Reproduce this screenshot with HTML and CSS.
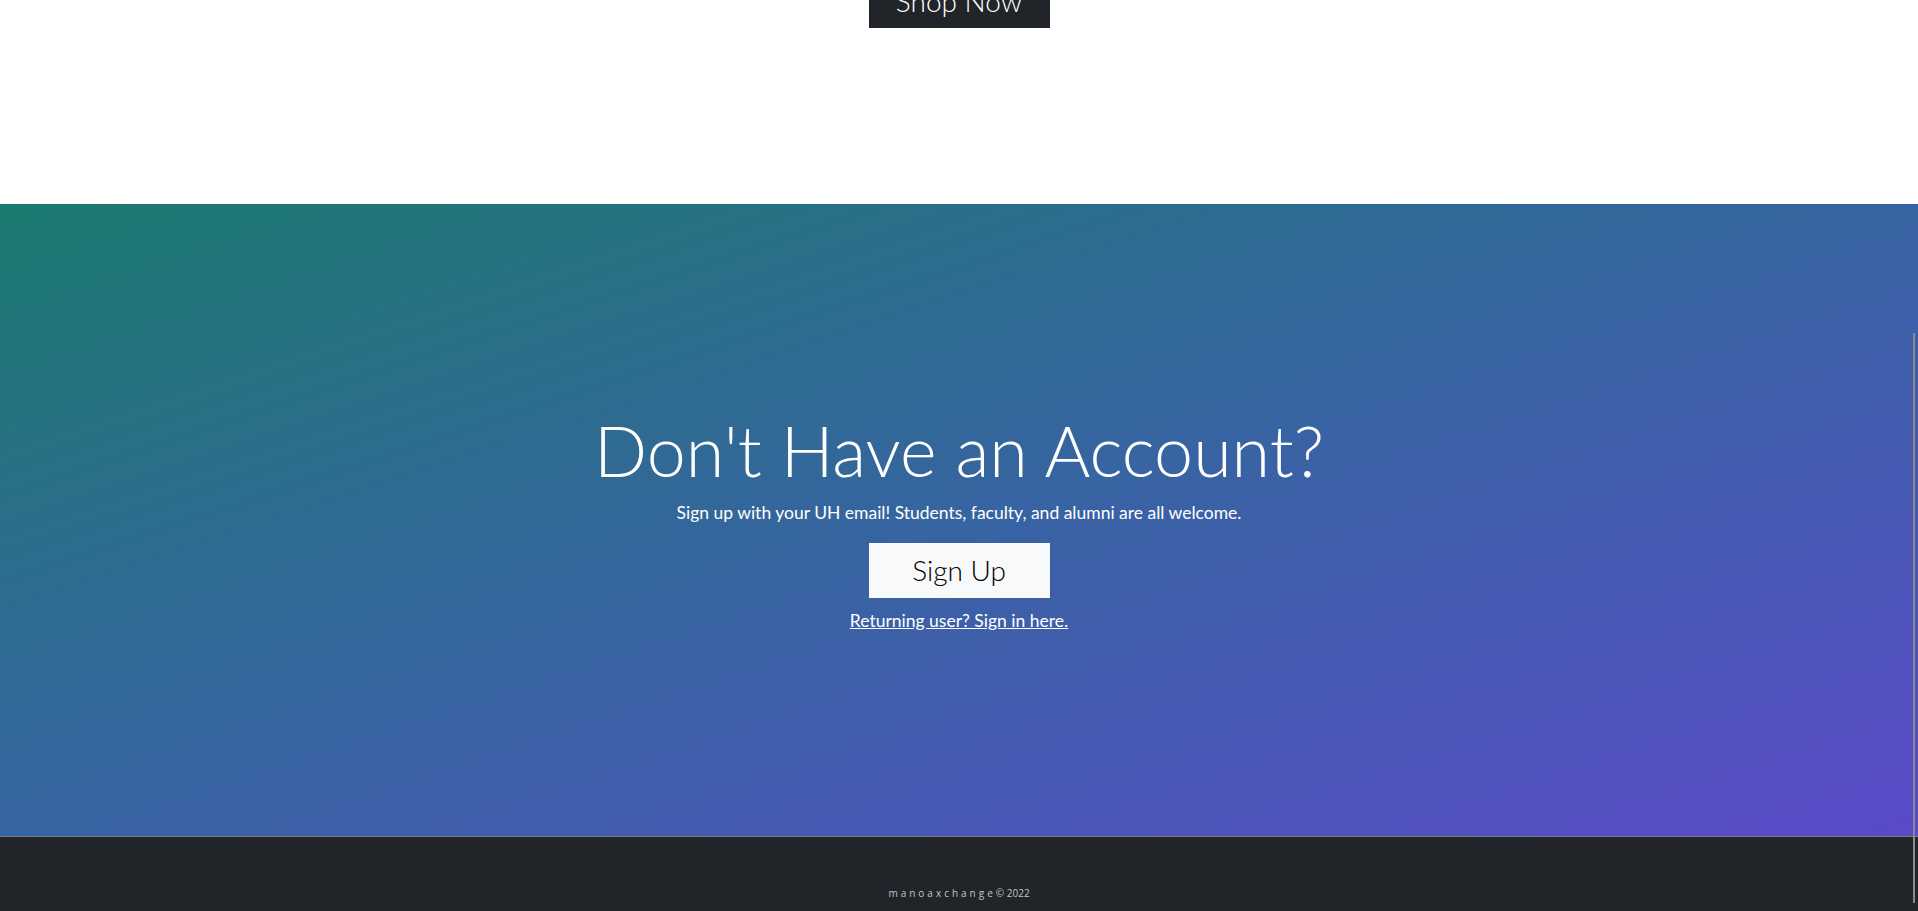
FILE: index.html
```html
<!DOCTYPE html>
<html lang="en">
<head>
<meta charset="utf-8">
<title>manoaxchange</title>
<link rel="stylesheet" href="styles.css">
</head>
<body>
<section class="shop">
  <a class="btn btn-dark" href="#">Shop Now</a>
</section>
<section class="cta">
  <h1 class="cta-title">Don't Have an Account?</h1>
  <p class="cta-text">Sign up with your UH email! Students, faculty, and alumni are all welcome.</p>
  <a class="btn btn-light" href="#">Sign Up</a>
  <a class="cta-link" href="#">Returning user? Sign in here.</a>
</section>
<footer class="footer">
  <p class="footer-text"><span class="brand">manoaxchange</span>© 2022</p>
</footer>
<div class="scroll-thumb"></div>
</body>
</html>
```
FILE: styles.css
```css
html, body {
  margin: 0;
  padding: 0;
}
body {
  font-family: "Lato", "Liberation Sans", sans-serif;
  background: #ffffff;
  overflow: hidden;
}
.shop {
  height: 204px;
  display: flex;
  justify-content: center;
  align-items: flex-start;
}
.btn {
  display: inline-flex;
  align-items: center;
  justify-content: center;
  box-sizing: border-box;
  width: 181px;
  height: 55px;
  font-family: "Lato", sans-serif;
  font-weight: 300;
  font-size: 28px;
  text-decoration: none;
}
.btn-dark {
  margin-top: -27px;
  background: #212529;
  color: #ffffff;
}
.btn-light {
  background: #f8f9fa;
  color: #000000;
  margin-top: 17px;
}
.cta {
  height: 632px;
  background: linear-gradient(to bottom right, #1b7a6f 0%, #3764a2 50%, #5a4ac9 100%);
  display: flex;
  flex-direction: column;
  align-items: center;
  justify-content: center;
  color: #ffffff;
}
.cta-title {
  margin: 0;
  font-weight: 300;
  font-size: 70px;
  line-height: 1.2;
}
.cta-text {
  margin: 8px 0 0;
  font-size: 17.5px;
  line-height: 26px;
}
.cta-link {
  color: #ffffff;
  font-size: 17.5px;
  line-height: 24px;
  margin-top: 11px;
  text-decoration: underline;
}
.footer {
  border-top: 1px solid #7d7d7d;
  background: #212529;
  height: 80px;
  display: flex;
  justify-content: center;
}
.footer-text {
  margin: 0;
  margin-top: 49px;
  font-family: "Open Sans", sans-serif;
  font-size: 10px;
  color: #c4c4c4;
}
.brand {
  letter-spacing: 3px;
}
.scroll-thumb {
  position: fixed;
  right: 3px;
  top: 333px;
  width: 2px;
  height: 570px;
  background: #8a8a8a;
}
```
